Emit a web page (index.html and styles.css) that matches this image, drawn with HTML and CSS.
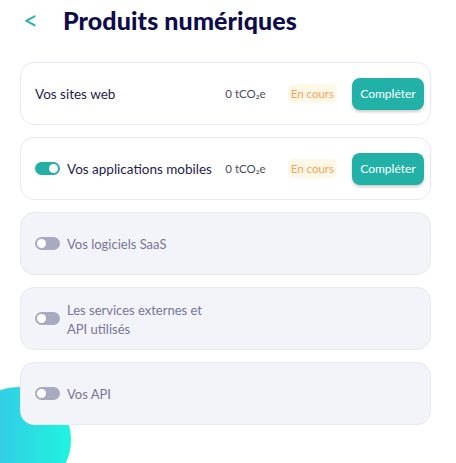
FILE: index.html
```html
<!DOCTYPE html>
<html lang="fr">
<head>
<meta charset="utf-8">
<link rel="stylesheet" href="styles.css">
</head>
<body>
<div class="blob"></div>
<main class="page">
  <header class="head">
    <span class="back">&lt;</span>
    <h1 class="title">Produits numériques</h1>
  </header>
  <section class="list">
    <div class="card">
      <div class="label">Vos sites web</div>
      <div class="co2">0 tCO₂e</div>
      <div class="badge">En cours</div>
      <button class="btn">Compléter</button>
    </div>
    <div class="card">
      <span class="toggle on"></span>
      <div class="label">Vos applications mobiles</div>
      <div class="co2">0 tCO₂e</div>
      <div class="badge">En cours</div>
      <button class="btn">Compléter</button>
    </div>
    <div class="card off">
      <span class="toggle"></span>
      <div class="label">Vos logiciels SaaS</div>
    </div>
    <div class="card off">
      <span class="toggle"></span>
      <div class="label narrow">Les services externes et API utilisés</div>
    </div>
    <div class="card off">
      <span class="toggle"></span>
      <div class="label">Vos API</div>
    </div>
  </section>
</main>
</body>
</html>
```
FILE: styles.css
```css
* { box-sizing: border-box; }
html, body { margin: 0; padding: 0; overflow: hidden; }
body {
  width: 456px;
  height: 463px;
  background: #ffffff;
  font-family: Lato, "Open Sans", sans-serif;
  position: relative;
}
.blob {
  position: absolute;
  left: -35px;
  top: 387px;
  width: 106px;
  height: 76px;
  background: linear-gradient(90deg, #3bbde9 0%, #20f3df 100%);
  clip-path: circle(53px at 53px 53px);
  z-index: 0;
}
.page {
  position: relative;
  z-index: 1;
  padding: 4px 25px 0 20px;
}
.head {
  display: flex;
  align-items: center;
  height: 32px;
}
.back {
  width: 43px;
  padding-left: 3px;
  color: #1fb3a7;
  font-size: 26px;
  font-weight: 400;
  line-height: 1;
}
.title {
  margin: 0;
  font-size: 25px;
  font-weight: 900;
  color: #0e0b4b;
  letter-spacing: 0.1px;
}
.list {
  margin-top: 26px;
  display: flex;
  flex-direction: column;
  gap: 12px;
}
.card {
  height: 63px;
  display: flex;
  align-items: center;
  padding: 0 6px 0 14px;
  background: #ffffff;
  border: 1px solid #e7e8f1;
  border-radius: 14px;
}
.card.off {
  background: #f3f4f9;
  border-color: #e8e9f1;
}
.label {
  flex: 1;
  min-width: 0;
  font-size: 13.5px;
  font-weight: 400;
  color: #1e1c4e;
}
.card.off .label { color: #77749a; font-size: 13px; }
.label.narrow { flex: 0 0 150px; line-height: 19px; padding-top: 2px; }
.toggle {
  position: relative;
  width: 25px;
  height: 13px;
  border-radius: 7px;
  background: #a8abbf;
  margin-right: 7px;
  flex: none;
}
.toggle::after {
  content: "";
  position: absolute;
  top: 2px;
  left: 2px;
  width: 9px;
  height: 9px;
  border-radius: 50%;
  background: #ffffff;
}
.toggle.on { background: #22b0a5; }
.toggle.on::after { left: 14px; }
.co2 {
  font-size: 11.5px;
  color: #4c4a63;
  margin-right: 22px;
  white-space: nowrap;
}
.badge {
  background: #fff8e6;
  color: #f6a25c;
  font-size: 11.5px;
  padding: 3px 3px;
  border-radius: 5px;
  margin-right: 15px;
}
.btn {
  border: none;
  background: #21b1a6;
  color: #ffffff;
  font-family: inherit;
  font-size: 12px;
  width: 72px;
  height: 32px;
  border-radius: 8px;
  box-shadow: 0 2px 3px rgba(0, 0, 0, 0.2);
  padding: 0;
}
```
